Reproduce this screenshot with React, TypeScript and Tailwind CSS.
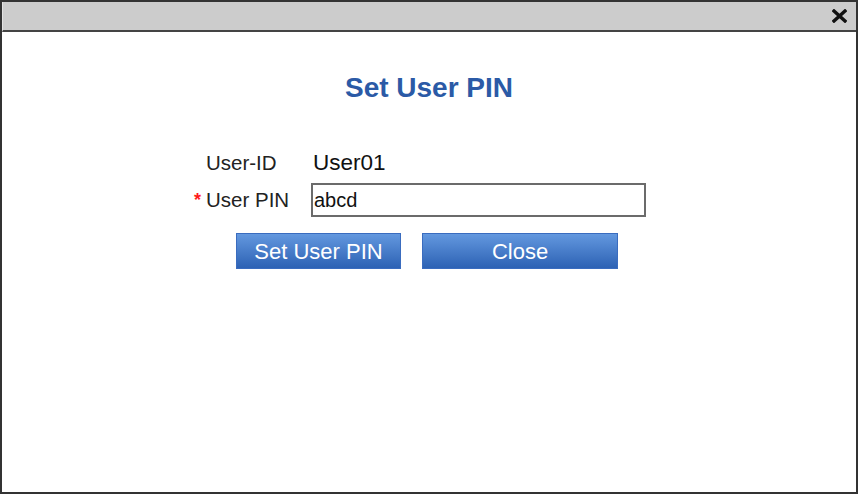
import React, { useState } from "react";

const FONT = { fontFamily: '"Liberation Sans", Arial, sans-serif' };

function CloseIcon() {
  return (
    <svg width="15" height="14" viewBox="0 0 15 14" aria-hidden="true">
      <path d="M2 2 L13 12 M13 2 L2 12" stroke="#111" strokeWidth="3.4" strokeLinecap="square" />
    </svg>
  );
}

function BlueButton({ label, width }: { label: string; width: string }) {
  return (
    <button
      className={`${width} h-[36px] border border-[#3a6cbf] bg-gradient-to-b from-[#6398df] to-[#2d62b4] text-[22px] text-white`}
    >
      {label}
    </button>
  );
}

export default function App() {
  const [pin, setPin] = useState("abcd");

  return (
    <div className="w-[858px] h-[494px] bg-white" style={FONT}>
      <div className="flex h-full flex-col border-2 border-[#333]">
        {/* Title bar */}
        <div className="flex h-[30px] items-center justify-end border-b-2 border-[#444] bg-[#cccccc] pr-[9px] border-l border-l-[#e2e2e2]">
          <button aria-label="Close" className="flex items-center">
            <CloseIcon />
          </button>
        </div>

        {/* Content */}
        <div className="flex flex-1 flex-col">
          <h1 className="mt-[40px] text-center text-[28px] font-bold leading-[32px] text-[#2b5aa6]">
            Set User PIN
          </h1>

          <div className="mt-[47px] flex flex-col pl-[190px]">
            <div className="flex h-[24px] items-center">
              <span className="w-[119px] pl-[14px] text-[20.5px] text-[#222]">User-ID</span>
              <span className="ml-[2px] text-[22.5px] text-[#111]">User01</span>
            </div>

            <div className="mt-[8px] flex items-center">
              <span className="flex w-[119px] items-center text-[20.5px] text-[#222]">
                <span className="ml-[2px] mr-[2px] w-[10px] text-[18px] font-bold leading-none text-[#ff1a1a]">*</span>
                User PIN
              </span>
              <input
                value={pin}
                onChange={(e) => setPin(e.target.value)}
                className="h-[34px] w-[335px] border-2 border-[#6b6b6b] px-[1px] text-[20px] text-[#111] outline-none"
              />
            </div>
          </div>

          <div className="mt-[16px] flex gap-[21px] pl-[234px]">
            <BlueButton label="Set User PIN" width="w-[165px]" />
            <BlueButton label="Close" width="w-[196px]" />
          </div>
        </div>
      </div>
    </div>
  );
}
